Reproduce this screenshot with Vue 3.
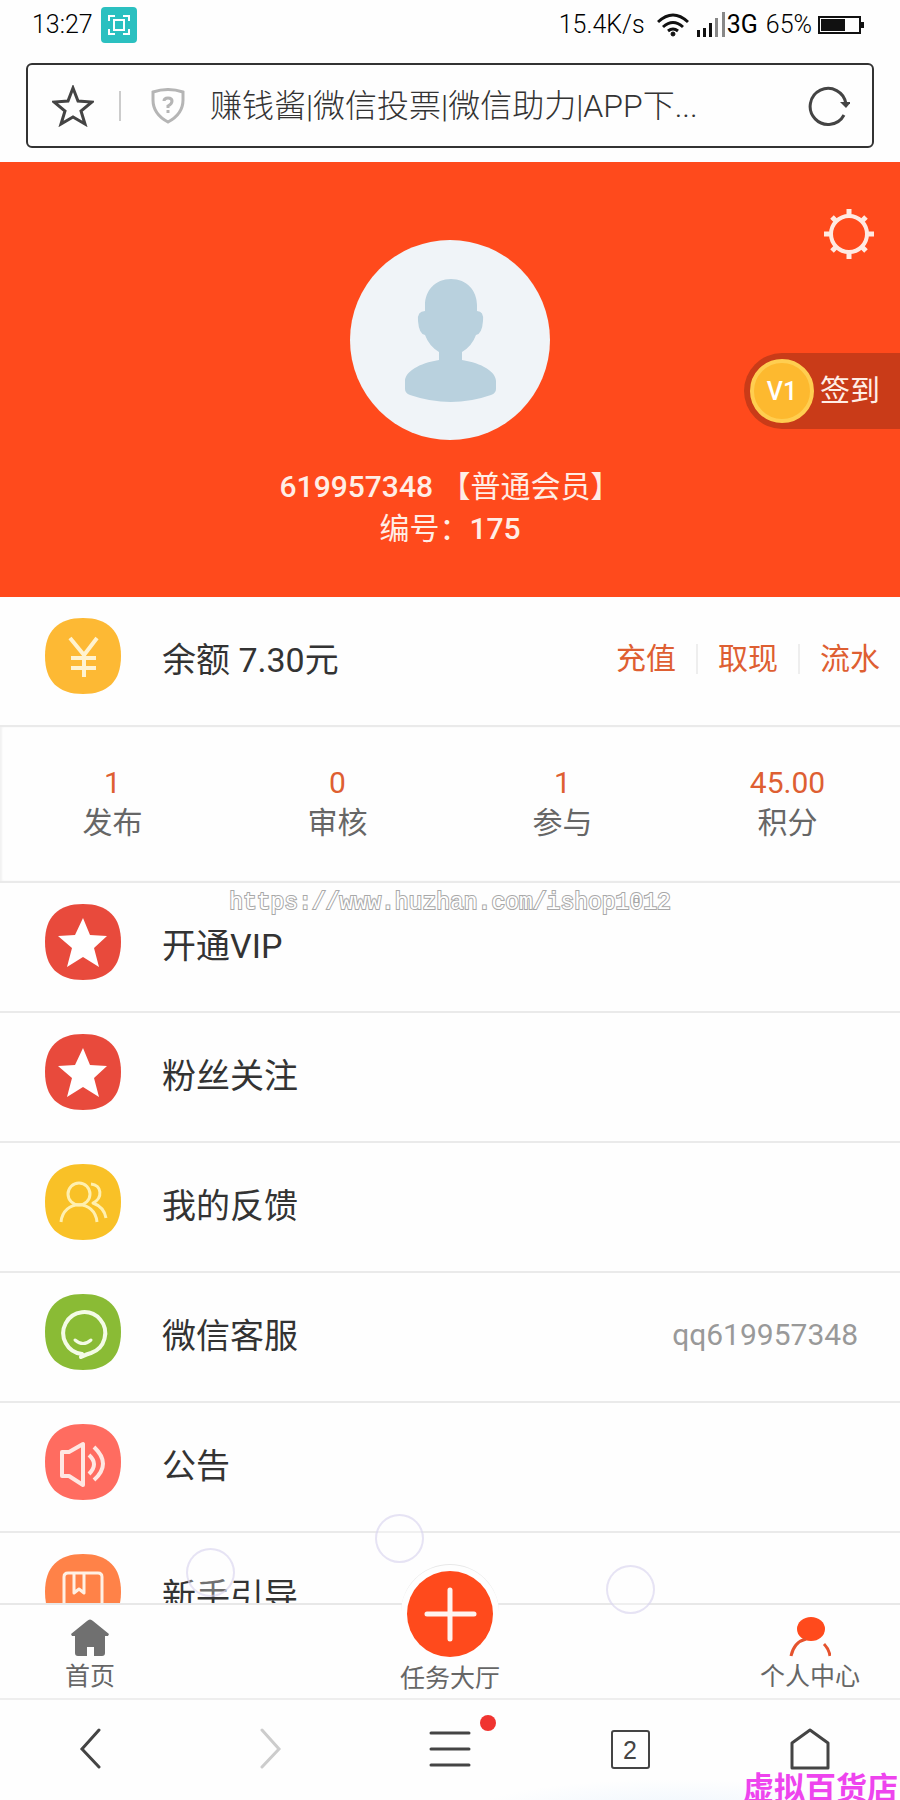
<template>
  <div class="phone">
    <div class="status-bar">
      <span class="status-text">13:27</span>
      <span class="scan-badge">
        <svg width="22" height="20" viewBox="0 0 22 20" fill="none" stroke="#fff" stroke-width="2">
          <path d="M1 6V1h6M15 1h6v5M21 14v5h-6M7 19H1v-5" />
          <rect x="6" y="5" width="10" height="10" />
        </svg>
      </span>
      <span class="status-text speed">15.4K/s</span>
      <svg class="wifi" width="32" height="24" viewBox="0 0 32 24" fill="none" stroke="#111" stroke-width="3">
        <path d="M1 9Q16-5 31 9M6 14q10-9 20 0M11 18q5-4 10 0" />
        <circle cx="16" cy="21" r="2" fill="#111" stroke-width="1" />
      </svg>
      <svg width="28" height="26" viewBox="0 0 28 26">
        <path d="M0 18h3v7H0zM6 16h3v9H6zM12 11h3v14h-3z" fill="#111" />
        <path d="M18 6h3v19h-3zM25 0h3v25h-3z" fill="#888" />
      </svg>
      <span class="status-text network">3G</span>
      <span class="status-text percent">65%</span>
      <svg class="battery" width="46" height="20" viewBox="0 0 46 20">
        <rect x="1" y="2" width="41" height="16" fill="none" stroke="#111" stroke-width="2" />
        <path d="M3 4h24v12H3zM43 7h3v6h-3z" fill="#111" />
      </svg>
    </div>

    <form class="address-bar" @submit.prevent>
      <button type="button" class="icon-btn" aria-label="收藏">
        <svg width="42" height="42" viewBox="0 0 42 42" fill="none" stroke="#444" stroke-width="3">
          <path d="M21 3l5 13 14 1-11 9 4 13-12-7-12 7 4-13-11-9 14-1z" />
        </svg>
      </button>
      <span class="address-divider"></span>
      <svg class="shield" width="34" height="36" viewBox="0 0 34 36" fill="none" stroke="#b5b5b5" stroke-width="3">
        <path d="M2 4q15-5 30 0v8q0 14-15 22Q2 26 2 12z" />
        <path d="M13 13q0-3 4-3t4 3q0 3-4 5v2M17 22v3" />
      </svg>
      <input v-model="address" class="address-input" type="text" aria-label="网址" />
      <button type="button" class="icon-btn" aria-label="刷新">
        <svg width="42" height="42" viewBox="0 0 42 42" fill="none" stroke="#444" stroke-width="3">
          <path d="M36 30A18 18 0 1 1 38 19" />
          <path d="M32 17h11l-5 6z" fill="#444" stroke="none" />
        </svg>
      </button>
    </form>

    <header class="hero">
      <button type="button" class="icon-btn settings" aria-label="设置">
        <svg width="52" height="52" viewBox="0 0 52 52" fill="none" stroke="#ffeae2" stroke-width="4">
          <circle cx="26" cy="26" r="18" />
          <path d="M26 1v7M26 44v7M1 26h7M44 26h7M9 9l5 5M38 38l5 5M43 9l-5 5M14 38l-5 5" stroke-width="5" />
        </svg>
      </button>
      <div class="avatar">
        <svg width="200" height="200" viewBox="0 0 200 200" fill="#b9d1de">
          <path d="M101 39c16 0 26 12 26 26v6q7 0 6 10-1 13-7 14-4 11-14 17v8c20 3 34 12 34 21v8q0 4-5 6-40 14-81 0-5-2-5-6v-8c0-9 14-18 34-21v-8q-10-6-14-17-6-1-7-14-1-10 7-10v-6c0-14 10-26 26-26z" />
        </svg>
      </div>
      <div class="user-line"><b>619957348</b> 【普通会员】</div>
      <div class="user-line">编号：<b>175</b></div>
      <button type="button" class="sign-in">
        <span class="coin">V1</span>
        <span class="sign-text">签到</span>
      </button>
    </header>

    <main class="content">
      <section class="row">
        <svg class="row-icon" width="76" height="76" viewBox="0 0 76 76">
          <path :d="blob" fill="#fdb934" />
          <path d="M25 20l14 17 13-17M39 37v22M26 40h25M26 50h25" fill="none" stroke="#fff3d0" stroke-width="4" />
        </svg>
        <span class="row-label">余额 7.30元</span>
        <nav class="actions">
          <a v-for="action in actions" :key="action" href="#">{{ action }}</a>
        </nav>
      </section>

      <section class="stats">
        <div v-for="stat in stats" :key="stat.label" class="stat">
          <span class="stat-value">{{ stat.value }}</span>
          <span>{{ stat.label }}</span>
        </div>
      </section>

      <a v-for="item in menu" :key="item.label" href="#" class="row">
        <svg class="row-icon" width="76" height="76" viewBox="0 0 76 76" fill="none" stroke-linejoin="round">
          <path :d="blob" :fill="item.color" />
          <path v-if="item.icon === 'star'" fill="#fff" d="M38 14l7 17 17 1-13 12 5 19-16-10-16 10 5-19-14-12 17-1z" />
          <g v-else-if="item.icon === 'people'" stroke="#fff0b0" stroke-width="3">
            <circle cx="34" cy="30" r="11" />
            <path d="M16 58c2-23 34-23 36 0M46 20c11 1 12 14 2 19q11 4 13 15" />
          </g>
          <g v-else-if="item.icon === 'smile'" stroke="#f4fbe6" stroke-linecap="round">
            <path stroke-width="4" d="M36 63l1-3a21 21 0 1 1 9-1q-4 1-10 4z" />
            <path stroke-width="3" d="M30 46q8 7 16 0" />
          </g>
          <path v-else-if="item.icon === 'speaker'" stroke="#ffe7e2" stroke-width="4" d="M17 28h7l14-8v41l-14-9h-7zM44 31q10 9 0 19M49 23q18 17 0 33" />
          <path v-else stroke="#fff0e4" stroke-width="3" d="M19 76V23q0-4 4-4h30q4 0 4 4v53M29 19v20l5-4 5 4V19" />
        </svg>
        <span class="row-label">{{ item.label }}</span>
        <span v-if="item.note" class="row-note">{{ item.note }}</span>
      </a>
      <span class="site-mark">https://www.huzhan.com/ishop1012</span>
    </main>

    <nav class="tab-bar">
      <a href="#" class="tab">
        <svg width="40" height="38" viewBox="0 0 40 38" fill="#707070">
          <path d="M17 2q3-3 6 0l16 13-1 2h-3v17q0 3-3 3h-8v-9h-7v9H8q-3 0-3-3V17H2l-1-2z" />
        </svg>
        <span>首页</span>
      </a>
      <a href="#" class="tab tab-main">
        <span class="halo">
          <svg width="86" height="86" viewBox="0 0 86 86">
            <circle cx="43" cy="43" r="43" fill="#ff4a1c" />
            <path d="M43 19v49M20 43h47" stroke="#fff3ee" stroke-width="5" stroke-linecap="round" />
          </svg>
        </span>
        <span>任务大厅</span>
      </a>
      <a href="#" class="tab">
        <svg width="42" height="42" viewBox="0 0 42 42">
          <ellipse cx="22" cy="14" rx="14" ry="12" fill="#ff4a1c" />
          <path d="M2 41q3-14 15-17M35 29q5 5 6 12" fill="none" stroke="#e5532e" stroke-width="3" />
        </svg>
        <span>个人中心</span>
      </a>
    </nav>

    <nav class="browser-bar">
      <button type="button" class="icon-btn" aria-label="后退">
        <svg width="42" height="42" viewBox="0 0 42 42" fill="none" stroke="#444" stroke-width="3" stroke-linecap="round">
          <path d="M30 2L13 21l17 18" />
        </svg>
      </button>
      <button type="button" class="icon-btn" aria-label="前进">
        <svg width="42" height="42" viewBox="0 0 42 42" fill="none" stroke="#ccc" stroke-width="3" stroke-linecap="round">
          <path d="M13 2l17 19-17 18" />
        </svg>
      </button>
      <button type="button" class="icon-btn menu-btn" aria-label="菜单">
        <svg width="42" height="42" viewBox="0 0 42 42" fill="none" stroke="#444" stroke-width="3" stroke-linecap="round">
          <path d="M2 5h38M2 21h38M2 37h38" />
        </svg>
        <span class="dot"></span>
      </button>
      <button type="button" class="icon-btn"><span class="tab-count">2</span></button>
      <button type="button" class="icon-btn" aria-label="主页">
        <svg width="42" height="42" viewBox="0 0 42 42" fill="none" stroke="#444" stroke-width="3" stroke-linejoin="round">
          <path d="M3 15L21 2l18 13v25H3z" />
        </svg>
      </button>
    </nav>

    <!-- плавающие пузырьки поверх списка -->
    <span class="bubble bubble-left"></span>
    <span class="bubble bubble-center"></span>
    <span class="bubble bubble-right"></span>
    <span class="shop-mark">虚拟百货店</span>
  </div>
</template>

<script setup>
import { ref } from 'vue';

const address = ref('赚钱酱|微信投票|微信助力|APP下...');

// Общая форма подложки для иконок
const blob = 'M38 0C63 0 76 13 76 38S63 76 38 76 0 63 0 38 13 0 38 0z';

const actions = ['充值', '取现', '流水'];

const stats = [
  { value: '1', label: '发布' },
  { value: '0', label: '审核' },
  { value: '1', label: '参与' },
  { value: '45.00', label: '积分' },
];

const menu = [
  { label: '开通VIP', icon: 'star', color: '#e84a3c' },
  { label: '粉丝关注', icon: 'star', color: '#e84a3c' },
  { label: '我的反馈', icon: 'people', color: '#f9c127' },
  { label: '微信客服', icon: 'smile', color: '#8abb35', note: 'qq619957348' },
  { label: '公告', icon: 'speaker', color: '#ff6c60' },
  { label: '新手引导', icon: 'book', color: '#ff8248' },
];
</script>

<style>
body {
  margin: 0;
  background: #fff;
}
</style>

<style scoped>
.phone {
  position: relative;
  display: flex;
  flex-direction: column;
  height: 100vh;
  overflow: hidden;
  background: #fefefe;
  color: #333;
  font-family: Roboto, "Noto Sans CJK SC", sans-serif;
}

a {
  color: inherit;
  text-decoration: none;
}

button {
  border: none;
  padding: 0;
  background: none;
  color: inherit;
  font: inherit;
  cursor: pointer;
}

svg {
  display: block;
  flex-shrink: 0;
}

.icon-btn {
  display: flex;
  align-items: center;
  justify-content: center;
}

.status-bar {
  display: flex;
  align-items: center;
  height: 50px;
  padding: 0 36px 0 32px;
  flex-shrink: 0;
  color: #000;
}

.status-text {
  font-size: 25px;
  font-weight: 300;
  line-height: 32px;
}

.scan-badge {
  display: flex;
  align-items: center;
  justify-content: center;
  width: 36px;
  height: 36px;
  margin-left: 8px;
  border-radius: 4px;
  background: #2bc0c0;
}

.speed {
  margin-left: auto;
}

.wifi {
  margin: 0 8px 0 12px;
}

.network {
  margin-left: 2px;
  font-weight: 400;
}

.percent {
  margin: 0 6px 0 8px;
}

.address-bar {
  display: flex;
  align-items: center;
  box-sizing: border-box;
  height: 85px;
  margin: 13px 26px 14px;
  padding: 0 22px 0 24px;
  flex-shrink: 0;
  border: 2px solid #333;
  border-radius: 6px;
}

.address-divider {
  width: 2px;
  height: 30px;
  margin: 0 30px 0 25px;
  background: #ccc;
}

.address-input {
  flex: 1;
  min-width: 0;
  padding: 0;
  margin-left: 25px;
  border: none;
  outline: none;
  background: transparent;
  color: #333;
  font: 300 32px/44px Roboto, "Noto Sans CJK SC", sans-serif;
}

.hero {
  position: relative;
  display: flex;
  flex-direction: column;
  align-items: center;
  box-sizing: border-box;
  height: 435px;
  padding-top: 78px;
  flex-shrink: 0;
  background: #ff4a1c;
  color: #ffeee6;
}

.settings {
  position: absolute;
  top: 46px;
  right: 25px;
}

.avatar {
  margin-bottom: 26px;
  border-radius: 50%;
  background: #f0f4f8;
}

.user-line {
  font-size: 30px;
  line-height: 42px;
  white-space: nowrap;
}

.user-line b {
  font-weight: 500;
}

.sign-in {
  position: absolute;
  top: 191px;
  right: 0;
  display: flex;
  align-items: center;
  gap: 6px;
  height: 76px;
  padding: 0 20px 0 6px;
  border-radius: 38px 0 0 38px;
  background: #c93b18;
  font-size: 30px;
}

.sign-text {
  padding-bottom: 6px;
}

.coin {
  box-sizing: border-box;
  width: 64px;
  height: 64px;
  border: 4px solid #ffce50;
  border-radius: 50%;
  background: #fdb92f;
  color: #fff;
  font-size: 25px;
  font-weight: 500;
  line-height: 58px;
  text-align: center;
}

.content {
  position: relative;
  flex: 1;
  min-height: 0;
  overflow: hidden;
}

.row {
  display: flex;
  align-items: center;
  box-sizing: border-box;
  height: 130px;
  padding: 0 20px 10px 45px;
  border-bottom: 2px solid #eaeaea;
}

.row-icon {
  margin-right: 41px;
}

.row-label {
  padding-top: 7px;
  font-size: 34px;
  line-height: 50px;
}

.row-note {
  margin-left: auto;
  padding: 4px 22px 0 0;
  color: #999;
  font-size: 30px;
}

.actions {
  display: flex;
  margin-left: auto;
  padding-top: 6px;
  color: #de5f32;
  font-size: 30px;
  line-height: 30px;
}

.actions a + a {
  margin-left: 20px;
  padding-left: 20px;
  border-left: 2px solid #eee;
}

.stats {
  display: grid;
  grid-template-columns: repeat(4, 1fr);
  padding: 36px 0 38px;
  border-bottom: 2px solid #eaeaea;
  box-shadow: inset 2px 0 2px #f2f2f2;
}

.stat {
  display: flex;
  flex-direction: column;
  align-items: center;
  color: #666;
  font-size: 30px;
  line-height: 40px;
}

.stat-value {
  color: #de5f32;
}

.site-mark {
  position: absolute;
  top: 291px;
  left: 0;
  right: 0;
  color: #fff;
  font: 23px/30px "Liberation Mono", monospace;
  text-align: center;
  -webkit-text-stroke: 2px #a8a8a8;
  paint-order: stroke fill;
  pointer-events: none;
}

.tab-bar {
  display: flex;
  justify-content: space-between;
  box-sizing: border-box;
  height: 95px;
  flex-shrink: 0;
  border-top: 2px solid #e8e8e8;
  color: #666;
  font-size: 25px;
  line-height: 36px;
}

.tab {
  display: flex;
  flex-direction: column;
  align-items: center;
  justify-content: flex-end;
  gap: 2px;
  width: 20%;
  padding-bottom: 3px;
}

.tab-main {
  z-index: 1;
  gap: 0;
  padding-bottom: 1px;
}

.halo {
  padding: 6px 6px 4px;
  border-top: 1px solid #e8e8e8;
  border-radius: 50%;
  background: #fefefe;
}

.browser-bar {
  display: grid;
  grid-template-columns: repeat(5, 1fr);
  box-sizing: border-box;
  height: 102px;
  padding-bottom: 2px;
  flex-shrink: 0;
  border-top: 2px solid #eee;
  background: radial-gradient(ellipse at 75% 115%, #edf5fd, transparent 22%);
}

.menu-btn {
  position: relative;
}

.dot {
  position: absolute;
  top: 15px;
  left: calc(50% + 30px);
  width: 16px;
  height: 16px;
  border-radius: 50%;
  background: #f03430;
}

.tab-count {
  box-sizing: border-box;
  width: 39px;
  height: 39px;
  border: 2px solid #444;
  border-radius: 3px;
  color: #444;
  font: 25px/36px "Liberation Sans", sans-serif;
}

.bubble {
  position: absolute;
  z-index: 2;
  box-sizing: border-box;
  width: 49px;
  height: 49px;
  border: 2px solid rgba(214, 208, 236, 0.6);
  border-radius: 50%;
  background: rgba(255, 255, 255, 0.3);
}

.bubble-left {
  bottom: 203px;
  left: 186px;
}

.bubble-center {
  bottom: 237px;
  left: 375px;
}

.bubble-right {
  bottom: 186px;
  left: 606px;
}

.shop-mark {
  position: absolute;
  right: 2px;
  bottom: -6px;
  color: #ee44ee;
  font: bold 31px/40px "Noto Sans CJK SC", sans-serif;
}
</style>
